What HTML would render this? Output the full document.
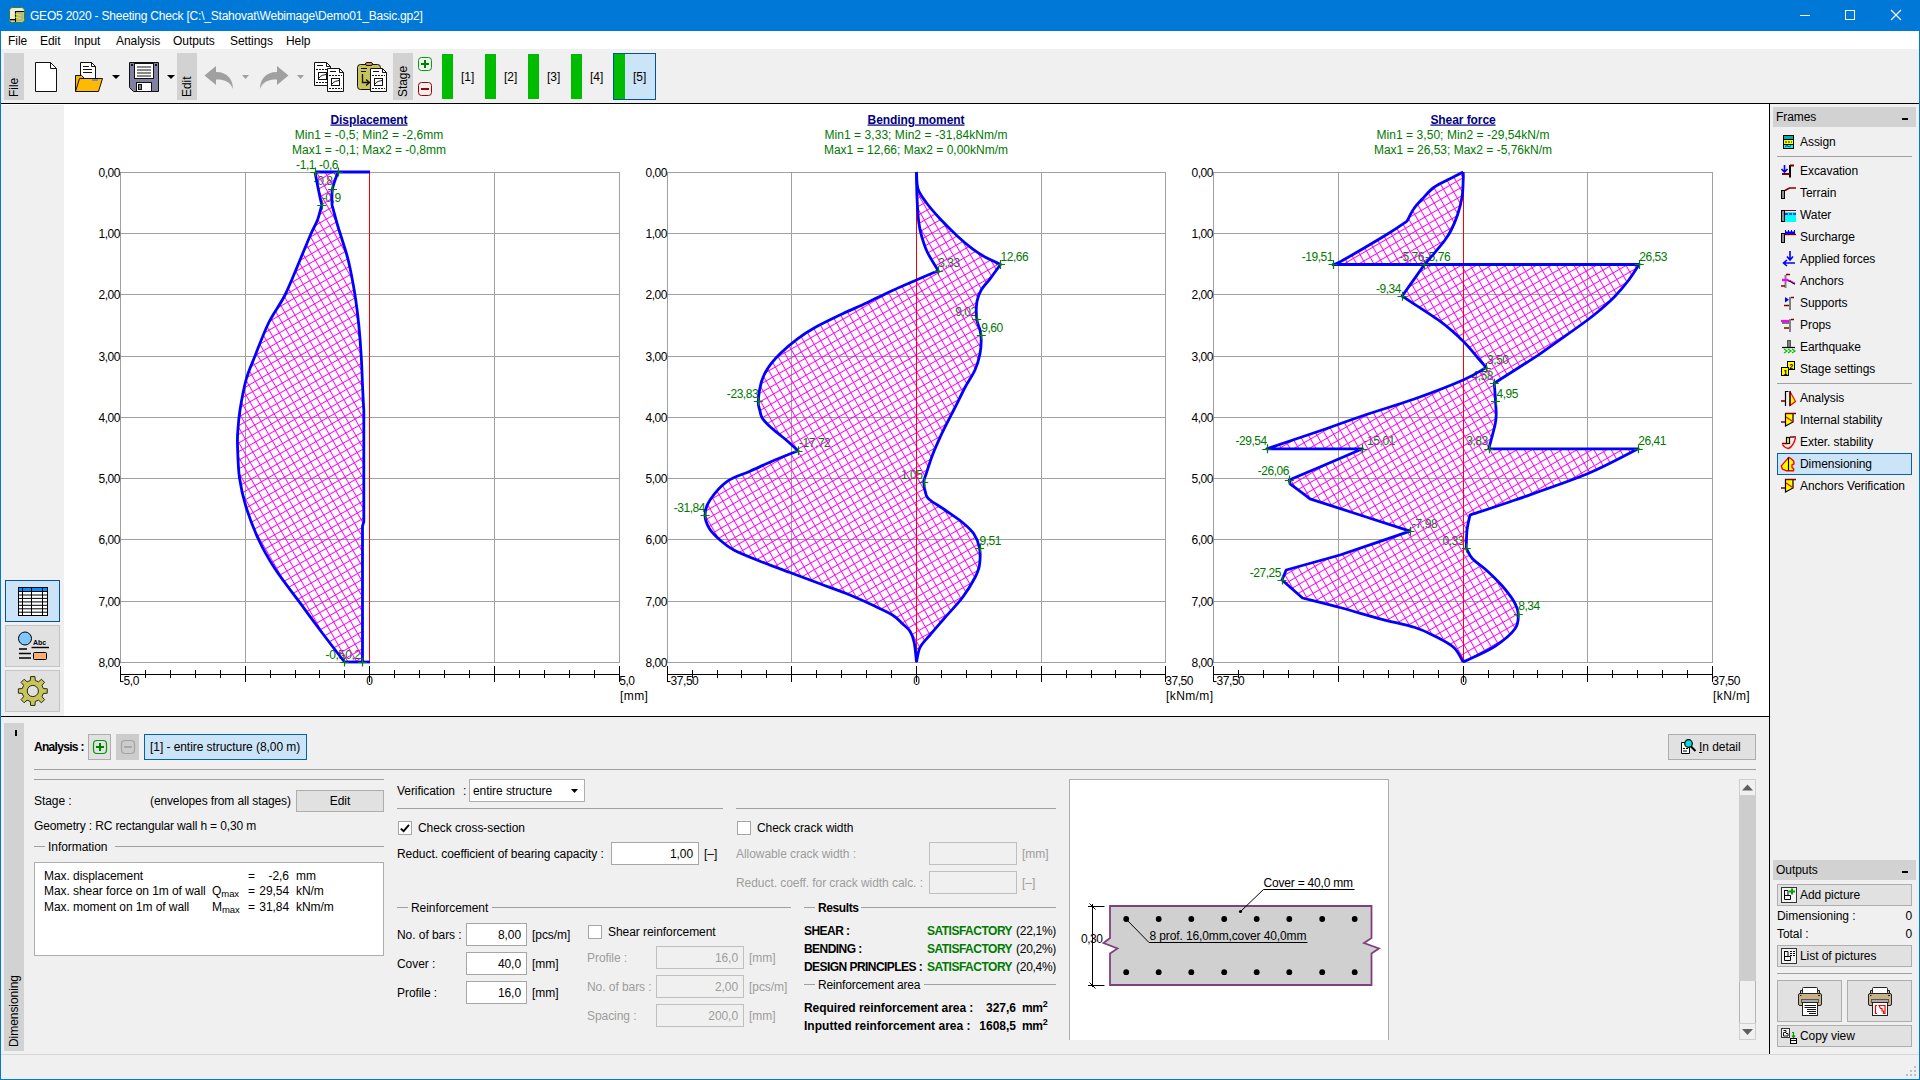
<!DOCTYPE html>
<html lang="en">
<head>
<meta charset="utf-8">
<title>GEO5 2020 - Sheeting Check</title>
<style>
*{box-sizing:border-box;margin:0;padding:0}
html,body{width:1920px;height:1080px;overflow:hidden;background:#f0f0f0}
body{font-family:"Liberation Sans",sans-serif;font-size:12px;color:#000;position:relative;line-height:14px;letter-spacing:-0.06px}
.abs{position:absolute}
.t{position:absolute;white-space:nowrap;line-height:14px;height:14px}
.btn{position:absolute;background:#e1e1e1;border:1px solid #adadad}
.inp{position:absolute;background:#fff;border:1px solid #a6a6a6;text-align:right;padding:4px 5px 0 0;line-height:14px}
.inp.dis{background:#f0f0f0;border-color:#bfbfbf;color:#9d9d9d}
.gray{color:#9d9d9d}
.hl{position:absolute;height:1px;background:#a0a0a0}
.vl{position:absolute;width:1px;background:#a0a0a0}
.chk{position:absolute;width:14px;height:14px;background:#fff;border:1px solid #a6a6a6}
.b{font-weight:bold}
.grn{color:#007a00}
svg{position:absolute;overflow:visible}
</style>
</head>
<body>
<!-- window frame -->
<div class="abs" style="left:0;top:0;width:1920px;height:1080px;background:#0078d7"></div>
<div class="abs" style="left:1px;top:31px;width:1918px;height:1048px;background:#f0f0f0"></div>
<!-- title bar -->
<svg style="left:9px;top:7px" width="16" height="16" viewBox="0 0 16 16">
<rect x="0.500" y="0.500" width="15" height="15" rx="3" fill="#ececd8" stroke="#3f7f1a"/>
<path d="M6.500 4.500H14.800V12Q14.800 14.800 12 14.800H6.500Z" fill="#b4ba78"/>
<path d="M1.200 12.600H6.500V14.800H3.500Q1.200 14.800 1.200 12.600Z" fill="#c8cc98"/>
<path d="M1 12.600H6.500M6.500 15V4.500H15" fill="none" stroke="#000" stroke-width="1.100"/>
<path d="M4.600 7.200C7 6.800 9 7.500 12 8.600M4.800 10.300C7 10 9 10.800 12 11.700" stroke="#f2f21a" stroke-width="0.900" fill="none"/>
</svg>
<div class="t" style="left:30px;top:9px;color:#fff;letter-spacing:-0.21px">GEO5 2020 - Sheeting Check [C:\_Stahovat\Webimage\Demo01_Basic.gp2]</div>
<svg style="left:1790px;top:0" width="130" height="31" viewBox="0 0 130 31">
<path d="M10 15.5H20" stroke="#fff" stroke-width="1"/>
<rect x="55.5" y="10.5" width="9" height="9" fill="none" stroke="#fff" stroke-width="1"/>
<path d="M101 10L111 20M111 10L101 20" stroke="#fff" stroke-width="1.1"/>
</svg>
<!-- menu bar -->
<div class="abs" style="left:1px;top:31px;width:1918px;height:18px;background:#fff"></div>
<div class="t" style="left:8px;top:34px">File</div>
<div class="t" style="left:40px;top:34px">Edit</div>
<div class="t" style="left:74px;top:34px">Input</div>
<div class="t" style="left:116px;top:34px">Analysis</div>
<div class="t" style="left:173px;top:34px">Outputs</div>
<div class="t" style="left:230px;top:34px">Settings</div>
<div class="t" style="left:286px;top:34px">Help</div>
<!-- toolbar -->
<div class="abs" style="left:4px;top:53px;width:20px;height:47px;background:#d2d2d2"></div>
<div class="abs" style="left:177px;top:53px;width:20px;height:47px;background:#d2d2d2"></div>
<div class="abs" style="left:393px;top:53px;width:20px;height:47px;background:#d2d2d2"></div>
<div class="t" style="left:7px;top:97px;transform-origin:0 0;transform:rotate(-90deg)">File</div>
<div class="t" style="left:180px;top:97px;transform-origin:0 0;transform:rotate(-90deg)">Edit</div>
<div class="t" style="left:396px;top:97px;transform-origin:0 0;transform:rotate(-90deg)">Stage</div>
<svg style="left:30px;top:58px" width="390" height="40" viewBox="30 58 390 40">
<!-- new -->
<path d="M35.5 62.5H50.5L56.5 68.5V91.5H35.5Z" fill="#fff" stroke="#111" stroke-width="1"/>
<path d="M50.5 62.5V68.5H56.5" fill="none" stroke="#111" stroke-width="1"/>
<!-- open -->
<path d="M80.5 62.5H91.5L95.5 66.5V80H80.5Z" fill="#fff" stroke="#111" stroke-width="1"/>
<path d="M91.5 62.5V66.5H95.5" fill="none" stroke="#111"/>
<path d="M83 66.5H89M83 69.5H92M83 72.5H92" stroke="#111" stroke-width="1"/>
<path d="M75.5 91.5V75.5H81.5L84.5 78.5H97.5V80" fill="#f7b500" stroke="#111" stroke-width="1"/>
<path d="M75.5 91.5L79.5 78.5H102.5L98.5 91.5Z" fill="#ffb900" stroke="#111" stroke-width="1"/>
<rect x="92" y="79" width="6" height="2" fill="#8a8a9a"/>
<path d="M112 75H120L116 79Z" fill="#000"/>
<!-- save -->
<path d="M129.500 62.500H158.500V91.500H133.500L129.500 87.500Z" fill="#8080a0" stroke="#111" stroke-width="1"/>
<rect x="134.500" y="63.500" width="19" height="15" fill="#fff" stroke="#111"/>
<path d="M137 67H151M137 70H151M137 73H151M137 76H151" stroke="#111" stroke-width="1"/>
<rect x="136.500" y="82.500" width="15" height="9" fill="#fff" stroke="#111"/>
<rect x="138.500" y="84.500" width="3" height="5" fill="#8080a0" stroke="#111"/>
<rect x="131" y="64" width="2" height="2" fill="#111"/><rect x="155" y="64" width="2" height="2" fill="#111"/>
<path d="M167 75H175L171 79Z" fill="#000"/>
<!-- undo -->
<path d="M204.500 75.500L216 66V72C228 72 233 80 233 89C230 82 226 79.500 216 79.500V85Z" fill="#a0a0a0"/>
<path d="M242 75H249L245.500 79Z" fill="#a0a0a0"/>
<!-- redo -->
<path d="M288.500 75.500L277 66V72C265 72 260 80 260 89C263 82 267 79.500 277 79.500V85Z" fill="#a0a0a0"/>
<path d="M297 75H304L300.500 79Z" fill="#a0a0a0"/>
<!-- copy -->
<g id="docA"><path d="M314.500 62.500H326.500L330.500 66.500V85.500H314.500Z" fill="#fff" stroke="#111"/>
<path d="M326.500 62.500V66.500H330.500" fill="none" stroke="#111"/>
<path d="M317 65.500H323" stroke="#111"/><path d="M316 69.500H329M316 82.500H329" stroke="#111" stroke-dasharray="2 1"/>
<rect x="318.500" y="72.500" width="8" height="7" fill="#fff" stroke="#111"/><path d="M319 78C321 75 324 75 326 74.500" fill="none" stroke="#111"/></g>
<use href="#docA" x="13" y="6"/>
<!-- paste -->
<rect x="357.500" y="64.500" width="23" height="25" rx="3" fill="#c8c45c" stroke="#111"/>
<rect x="365.500" y="62.500" width="7" height="3" rx="1.500" fill="#e09030" stroke="#111"/>
<path d="M361 68.500H367M361 71.500H366" stroke="#111"/>
<path d="M362.500 74V82.500H369M366 79.500L369.500 82.500L366 85.500" fill="none" stroke="#111" stroke-width="1.300"/>
<use href="#docA" x="56" y="6"/>
</svg>
<!-- stage +/- -->
<svg style="left:417px;top:56px" width="16" height="42" viewBox="417 56 16 42">
<rect x="418.500" y="57.500" width="13" height="13" rx="3" fill="#f0f0f0" stroke="#00a000"/>
<path d="M421 64H429M425 60V68" stroke="#008000" stroke-width="2"/>
<rect x="418.500" y="82.500" width="13" height="13" rx="3" fill="#f0f0f0" stroke="#a00000"/>
<path d="M421 89H429" stroke="#a00000" stroke-width="2"/>
</svg>
<div class="abs" style="left:613px;top:53px;width:43px;height:47px;background:#cce4f7;border:1px solid #00549e"></div>
<div class="abs" style="left:442px;top:54px;width:11px;height:45px;background:#00bc00"></div>
<div class="abs" style="left:485px;top:54px;width:11px;height:45px;background:#00bc00"></div>
<div class="abs" style="left:528px;top:54px;width:11px;height:45px;background:#00bc00"></div>
<div class="abs" style="left:571px;top:54px;width:11px;height:45px;background:#00bc00"></div>
<div class="abs" style="left:614px;top:54px;width:11px;height:45px;background:#00bc00"></div>
<div class="t" style="left:461px;top:70px">[1]</div>
<div class="t" style="left:504px;top:70px">[2]</div>
<div class="t" style="left:547px;top:70px">[3]</div>
<div class="t" style="left:590px;top:70px">[4]</div>
<div class="t" style="left:633px;top:70px">[5]</div>
<!-- separators -->
<div class="abs" style="left:1px;top:103px;width:1918px;height:1px;background:#000"></div>
<div class="abs" style="left:1px;top:104px;width:1768px;height:612px;background:#fff"></div>
<div class="abs" style="left:1px;top:105px;width:63px;height:611px;background:#f0f0f0"></div>
<div class="abs" style="left:1769px;top:104px;width:1px;height:950px;background:#000"></div>
<div class="abs" style="left:1px;top:716px;width:1768px;height:1px;background:#000"></div>
<svg style="left:64px;top:104px" width="1705" height="612" viewBox="64 104 1705 612" font-family="Liberation Sans, sans-serif" font-size="12">
<defs><pattern id="hx" patternUnits="userSpaceOnUse" width="7.5" height="7.5" patternTransform="rotate(-30)"><path d="M0 0.5H7.5M0.5 0V7.5" stroke="#ff00ff" stroke-width="1" shape-rendering="crispEdges"/></pattern></defs>
<path d="M120.5 172V663M245.5 172V663M369.5 172V663M494.5 172V663M619.5 172V663M120.0 172.5H620.0M120.0 233.5H620.0M120.0 294.5H620.0M120.0 356.5H620.0M120.0 417.5H620.0M120.0 478.5H620.0M120.0 539.5H620.0M120.0 601.5H620.0M120.0 662.5H620.0" stroke="#a0a0a0" stroke-width="1" fill="none" shape-rendering="crispEdges"/>
<text x="120.0" y="176.80" text-anchor="end" letter-spacing="-0.45">0,00</text>
<text x="120.0" y="238.05" text-anchor="end" letter-spacing="-0.45">1,00</text>
<text x="120.0" y="299.30" text-anchor="end" letter-spacing="-0.45">2,00</text>
<text x="120.0" y="360.55" text-anchor="end" letter-spacing="-0.45">3,00</text>
<text x="120.0" y="421.80" text-anchor="end" letter-spacing="-0.45">4,00</text>
<text x="120.0" y="483.05" text-anchor="end" letter-spacing="-0.45">5,00</text>
<text x="120.0" y="544.30" text-anchor="end" letter-spacing="-0.45">6,00</text>
<text x="120.0" y="605.55" text-anchor="end" letter-spacing="-0.45">7,00</text>
<text x="120.0" y="666.80" text-anchor="end" letter-spacing="-0.45">8,00</text>
<text x="369.0" y="123.5" text-anchor="middle" font-weight="bold" fill="#000080" text-decoration="underline" letter-spacing="-0.08">Displacement</text>
<text x="369.0" y="138.5" text-anchor="middle" fill="#007800" letter-spacing="0.05">Min1 = -0,5; Min2 = -2,6mm</text>
<text x="369.0" y="153.5" text-anchor="middle" fill="#007800" letter-spacing="0">Max1 = -0,1; Max2 = -0,8mm</text>
<text x="315.0" y="168.5" text-anchor="end" fill="#007800" letter-spacing="-0.45">-1,1</text>
<text x="338.0" y="168.5" text-anchor="end" fill="#007800" letter-spacing="-0.45">-0,6</text>
<text x="332.5" y="185.2" text-anchor="end" fill="#007800" letter-spacing="-0.45">-0,8</text>
<text x="321.8" y="201.5" text-anchor="start" fill="#007800" letter-spacing="-0.45">-0,9</text>
<text x="344.5" y="658.5" text-anchor="end" fill="#007800" letter-spacing="-0.45">-0,5</text>
<text x="360.5" y="658.5" text-anchor="end" fill="#007800" letter-spacing="-0.45">-0,2</text>
<path d="M315.0 172.0C315.4 174.2 316.4 179.5 317.5 185.0C318.6 190.5 321.0 201.7 321.8 205.0C321.0 207.5 319.3 215.2 317.5 220.0C315.7 224.8 313.9 227.1 311.0 233.8C308.1 240.4 304.3 249.8 300.0 260.0C295.7 270.2 290.2 284.6 285.0 295.0C279.8 305.4 273.8 312.3 268.8 322.5C263.8 332.7 258.8 346.4 255.0 356.0C251.2 365.6 248.5 371.0 246.0 380.0C243.5 389.0 241.3 401.9 240.0 410.0C238.7 418.1 238.4 422.9 238.0 428.8C237.6 434.6 237.2 436.8 237.5 445.0C237.8 453.2 238.0 467.6 239.5 478.0C241.0 488.4 243.0 497.2 246.2 507.5C249.5 517.8 254.0 529.8 258.8 540.0C263.5 550.2 268.3 558.5 275.0 568.8C281.7 579.0 291.2 591.0 298.8 601.2C306.2 611.5 312.4 619.9 320.0 630.0C327.6 640.1 340.4 656.7 344.5 662.0L362.5 662.0C362.5 639.3 362.5 548.7 362.5 526.0C362.7 525.3 363.5 522.7 363.8 522.0C363.8 503.3 363.8 428.7 363.8 410.0C363.5 405.8 362.9 394.0 362.5 385.0C362.1 376.0 361.9 366.0 361.2 356.0C360.6 346.0 359.8 335.2 358.8 325.0C357.7 314.8 356.7 305.4 355.0 295.0C353.3 284.6 350.8 271.2 348.8 262.5C346.8 253.8 344.9 248.8 343.0 242.5C341.1 236.2 339.3 231.2 337.5 225.0C335.7 218.8 332.9 208.3 332.0 205.0C332.1 202.3 331.5 194.2 332.5 188.8C333.5 183.2 337.1 174.8 338.0 172.0Z" fill="url(#hx)" fill-rule="evenodd" stroke="none"/>
<path d="M369.5 172V663" stroke="#ff0000" stroke-width="1" shape-rendering="crispEdges"/>
<path d="M315.0 172.0C315.4 174.2 316.4 179.5 317.5 185.0C318.6 190.5 321.0 201.7 321.8 205.0C321.0 207.5 319.3 215.2 317.5 220.0C315.7 224.8 313.9 227.1 311.0 233.8C308.1 240.4 304.3 249.8 300.0 260.0C295.7 270.2 290.2 284.6 285.0 295.0C279.8 305.4 273.8 312.3 268.8 322.5C263.8 332.7 258.8 346.4 255.0 356.0C251.2 365.6 248.5 371.0 246.0 380.0C243.5 389.0 241.3 401.9 240.0 410.0C238.7 418.1 238.4 422.9 238.0 428.8C237.6 434.6 237.2 436.8 237.5 445.0C237.8 453.2 238.0 467.6 239.5 478.0C241.0 488.4 243.0 497.2 246.2 507.5C249.5 517.8 254.0 529.8 258.8 540.0C263.5 550.2 268.3 558.5 275.0 568.8C281.7 579.0 291.2 591.0 298.8 601.2C306.2 611.5 312.4 619.9 320.0 630.0C327.6 640.1 340.4 656.7 344.5 662.0" fill="none" stroke="#0000ff" stroke-width="2.8" stroke-linejoin="round"/>
<path d="M338.0 172.0C337.1 174.8 333.5 183.2 332.5 188.8C331.5 194.2 332.1 202.3 332.0 205.0C332.9 208.3 335.7 218.8 337.5 225.0C339.3 231.2 341.1 236.2 343.0 242.5C344.9 248.8 346.8 253.8 348.8 262.5C350.8 271.2 353.3 284.6 355.0 295.0C356.7 305.4 357.7 314.8 358.8 325.0C359.8 335.2 360.6 346.0 361.2 356.0C361.9 366.0 362.1 376.0 362.5 385.0C362.9 394.0 363.5 405.8 363.8 410.0C363.8 428.7 363.8 503.3 363.8 522.0C363.5 522.7 362.7 525.3 362.5 526.0C362.5 548.7 362.5 639.3 362.5 662.0" fill="none" stroke="#0000ff" stroke-width="2.8" stroke-linejoin="round"/>
<path d="M315.0 172.0L370.0 172.0" stroke="#0000ff" stroke-width="2.8"/>
<path d="M344.5 662.0L370.0 662.0" stroke="#0000ff" stroke-width="2.8"/>
<path d="M310.5 172.5h9M315.5 167.5v9M333.5 172.5h9M338.5 167.5v9M328.0 189.5h9M332.5 184.2v9M317.2 205.5h9M322.5 200.5v9M340.0 662.5h9M344.5 657.5v9M358.0 662.5h9M362.5 657.5v9" stroke="#008000" stroke-width="1.2" fill="none"/>
<path d="M120.0 674H620.0M120.5 666V682M145.5 670V678M170.5 670V678M195.5 670V678M220.5 670V678M245.5 666V682M270.5 670V678M295.5 670V678M319.5 670V678M344.5 670V678M369.5 666V682M394.5 670V678M419.5 670V678M444.5 670V678M469.5 670V678M494.5 666V682M519.5 670V678M544.5 670V678M569.5 670V678M594.5 670V678M619.5 666V682" stroke="#000" stroke-width="1" fill="none" shape-rendering="crispEdges"/>
<text x="120.0" y="685" letter-spacing="-0.45">-5,0</text>
<text x="619.2" y="685" letter-spacing="-0.45">5,0</text>
<text x="620.0" y="700" letter-spacing="0.4">[mm]</text>
<text x="369.5" y="685" text-anchor="middle">0</text>
<path d="M667.5 172V663M791.5 172V663M916.5 172V663M1041.5 172V663M1165.5 172V663M667.0 172.5H1166.0M667.0 233.5H1166.0M667.0 294.5H1166.0M667.0 356.5H1166.0M667.0 417.5H1166.0M667.0 478.5H1166.0M667.0 539.5H1166.0M667.0 601.5H1166.0M667.0 662.5H1166.0" stroke="#a0a0a0" stroke-width="1" fill="none" shape-rendering="crispEdges"/>
<text x="667.0" y="176.80" text-anchor="end" letter-spacing="-0.45">0,00</text>
<text x="667.0" y="238.05" text-anchor="end" letter-spacing="-0.45">1,00</text>
<text x="667.0" y="299.30" text-anchor="end" letter-spacing="-0.45">2,00</text>
<text x="667.0" y="360.55" text-anchor="end" letter-spacing="-0.45">3,00</text>
<text x="667.0" y="421.80" text-anchor="end" letter-spacing="-0.45">4,00</text>
<text x="667.0" y="483.05" text-anchor="end" letter-spacing="-0.45">5,00</text>
<text x="667.0" y="544.30" text-anchor="end" letter-spacing="-0.45">6,00</text>
<text x="667.0" y="605.55" text-anchor="end" letter-spacing="-0.45">7,00</text>
<text x="667.0" y="666.80" text-anchor="end" letter-spacing="-0.45">8,00</text>
<text x="916.0" y="123.5" text-anchor="middle" font-weight="bold" fill="#000080" text-decoration="underline" letter-spacing="-0.08">Bending moment</text>
<text x="916.0" y="138.5" text-anchor="middle" fill="#007800" letter-spacing="0.05">Min1 = 3,33; Min2 = -31,84kNm/m</text>
<text x="916.0" y="153.5" text-anchor="middle" fill="#007800" letter-spacing="0">Max1 = 12,66; Max2 = 0,00kNm/m</text>
<text x="1000.5" y="261.0" text-anchor="start" fill="#007800" letter-spacing="-0.45">12,66</text>
<text x="938.2" y="267.2" text-anchor="start" fill="#007800" letter-spacing="-0.45">3,33</text>
<text x="976.8" y="315.8" text-anchor="end" fill="#007800" letter-spacing="-0.45">9,02</text>
<text x="981.2" y="331.5" text-anchor="start" fill="#007800" letter-spacing="-0.45">9,60</text>
<text x="758.2" y="397.8" text-anchor="end" fill="#007800" letter-spacing="-0.45">-23,83</text>
<text x="799.0" y="447.2" text-anchor="start" fill="#007800" letter-spacing="-0.45">-17,72</text>
<text x="922.5" y="479.0" text-anchor="end" fill="#007800" letter-spacing="-0.45">1,05</text>
<text x="705.0" y="511.5" text-anchor="end" fill="#007800" letter-spacing="-0.45">-31,84</text>
<text x="979.5" y="544.5" text-anchor="start" fill="#007800" letter-spacing="-0.45">9,51</text>
<path d="M916.5 172.0C916.6 176.2 916.6 189.1 917.0 197.5C917.4 205.9 917.9 215.8 918.8 222.5C919.6 229.2 920.5 232.5 922.0 237.5C923.5 242.5 924.8 247.0 927.5 252.5C930.2 258.0 936.5 267.7 938.2 270.8C934.6 272.3 924.1 276.7 916.5 280.0C908.9 283.3 900.7 286.8 892.5 290.5C884.3 294.2 876.2 298.4 867.5 302.5C858.8 306.6 848.8 310.8 840.0 315.0C831.2 319.2 822.1 323.5 815.0 327.5C807.9 331.5 803.3 334.4 797.5 338.8C791.7 343.1 785.0 348.8 780.0 353.8C775.0 358.8 770.6 364.0 767.5 368.8C764.4 373.5 762.8 377.1 761.2 382.5C759.7 387.9 758.5 396.6 758.2 401.2C758.0 405.9 759.1 407.4 759.8 410.2C760.5 413.0 760.6 415.5 762.2 418.1C763.8 420.7 766.5 423.4 769.3 426.0C772.0 428.6 775.6 431.3 778.7 433.9C781.9 436.5 785.0 438.9 788.2 441.7C791.4 444.5 796.4 449.2 798.0 450.8C794.2 452.3 783.0 456.6 775.0 460.0C767.0 463.4 757.9 467.7 750.0 471.2C742.1 474.8 734.2 476.5 727.5 481.2C720.8 486.0 713.8 494.4 710.0 500.0C706.2 505.6 705.1 510.2 705.0 515.0C704.9 519.8 707.0 524.6 709.5 528.8C712.0 532.9 716.0 536.5 720.0 540.0C724.0 543.5 727.1 546.5 733.8 550.0C740.4 553.5 750.6 557.5 760.0 561.2C769.4 565.0 780.0 568.8 790.0 572.5C800.0 576.2 810.0 580.0 820.0 583.8C830.0 587.5 840.8 591.2 850.0 595.0C859.2 598.8 867.9 602.9 875.0 606.2C882.1 609.6 887.9 612.1 892.5 615.0C897.1 617.9 899.6 621.0 902.5 623.8C905.4 626.5 908.0 628.1 910.0 631.2C912.0 634.4 913.2 637.4 914.2 642.5C915.3 647.6 916.1 658.8 916.5 662.0L916.5 662.0C917.1 659.6 917.8 652.0 920.0 647.5C922.2 643.0 925.8 640.0 930.0 635.0C934.2 630.0 939.6 623.8 945.0 617.5C950.4 611.2 957.5 604.2 962.5 597.5C967.5 590.8 972.2 582.9 975.0 577.5C977.8 572.1 978.8 569.9 979.5 565.0C980.2 560.1 980.5 553.2 979.5 548.0C978.5 542.8 976.6 538.0 973.8 533.8C970.9 529.5 967.3 526.5 962.5 522.5C957.7 518.5 950.4 513.8 945.0 510.0C939.6 506.2 933.1 502.5 930.0 500.0C926.9 497.5 927.3 497.9 926.2 495.0C925.2 492.1 923.8 486.0 923.8 482.5C923.8 479.0 924.8 478.3 926.2 473.8C927.7 469.2 930.2 461.0 932.5 455.0C934.8 449.0 937.8 442.5 940.0 437.5C942.2 432.5 943.5 430.0 946.0 425.0C948.5 420.0 951.8 413.8 955.0 407.5C958.2 401.2 961.7 393.8 965.0 387.5C968.3 381.2 972.5 375.6 975.0 370.0C977.5 364.4 979.0 358.8 980.0 353.8C981.0 348.8 981.2 344.0 981.2 340.0C981.2 336.0 980.8 333.5 980.0 330.0C979.2 326.5 977.2 324.0 976.8 319.2C976.2 314.5 976.2 306.1 977.0 301.2C977.8 296.4 979.1 293.8 981.2 290.0C983.4 286.2 986.8 283.0 990.0 278.8C993.2 274.5 998.8 266.9 1000.5 264.5C997.9 263.2 989.7 259.6 985.0 257.0C980.3 254.4 977.1 252.2 972.5 248.8C967.9 245.3 962.9 241.2 957.5 236.2C952.1 231.2 945.2 224.4 940.0 218.8C934.8 213.1 929.9 207.5 926.2 202.5C922.6 197.5 919.6 193.8 918.0 188.8C916.4 183.7 916.8 174.8 916.5 172.0Z" fill="url(#hx)" fill-rule="evenodd" stroke="none"/>
<path d="M916.5 172V663" stroke="#ff0000" stroke-width="1" shape-rendering="crispEdges"/>
<path d="M916.5 172.0C916.6 176.2 916.6 189.1 917.0 197.5C917.4 205.9 917.9 215.8 918.8 222.5C919.6 229.2 920.5 232.5 922.0 237.5C923.5 242.5 924.8 247.0 927.5 252.5C930.2 258.0 936.5 267.7 938.2 270.8C934.6 272.3 924.1 276.7 916.5 280.0C908.9 283.3 900.7 286.8 892.5 290.5C884.3 294.2 876.2 298.4 867.5 302.5C858.8 306.6 848.8 310.8 840.0 315.0C831.2 319.2 822.1 323.5 815.0 327.5C807.9 331.5 803.3 334.4 797.5 338.8C791.7 343.1 785.0 348.8 780.0 353.8C775.0 358.8 770.6 364.0 767.5 368.8C764.4 373.5 762.8 377.1 761.2 382.5C759.7 387.9 758.5 396.6 758.2 401.2C758.0 405.9 759.1 407.4 759.8 410.2C760.5 413.0 760.6 415.5 762.2 418.1C763.8 420.7 766.5 423.4 769.3 426.0C772.0 428.6 775.6 431.3 778.7 433.9C781.9 436.5 785.0 438.9 788.2 441.7C791.4 444.5 796.4 449.2 798.0 450.8C794.2 452.3 783.0 456.6 775.0 460.0C767.0 463.4 757.9 467.7 750.0 471.2C742.1 474.8 734.2 476.5 727.5 481.2C720.8 486.0 713.8 494.4 710.0 500.0C706.2 505.6 705.1 510.2 705.0 515.0C704.9 519.8 707.0 524.6 709.5 528.8C712.0 532.9 716.0 536.5 720.0 540.0C724.0 543.5 727.1 546.5 733.8 550.0C740.4 553.5 750.6 557.5 760.0 561.2C769.4 565.0 780.0 568.8 790.0 572.5C800.0 576.2 810.0 580.0 820.0 583.8C830.0 587.5 840.8 591.2 850.0 595.0C859.2 598.8 867.9 602.9 875.0 606.2C882.1 609.6 887.9 612.1 892.5 615.0C897.1 617.9 899.6 621.0 902.5 623.8C905.4 626.5 908.0 628.1 910.0 631.2C912.0 634.4 913.2 637.4 914.2 642.5C915.3 647.6 916.1 658.8 916.5 662.0" fill="none" stroke="#0000ff" stroke-width="2.8" stroke-linejoin="round"/>
<path d="M916.5 172.0C916.8 174.8 916.4 183.7 918.0 188.8C919.6 193.8 922.6 197.5 926.2 202.5C929.9 207.5 934.8 213.1 940.0 218.8C945.2 224.4 952.1 231.2 957.5 236.2C962.9 241.2 967.9 245.3 972.5 248.8C977.1 252.2 980.3 254.4 985.0 257.0C989.7 259.6 997.9 263.2 1000.5 264.5C998.8 266.9 993.2 274.5 990.0 278.8C986.8 283.0 983.4 286.2 981.2 290.0C979.1 293.8 977.8 296.4 977.0 301.2C976.2 306.1 976.2 314.5 976.8 319.2C977.2 324.0 979.2 326.5 980.0 330.0C980.8 333.5 981.2 336.0 981.2 340.0C981.2 344.0 981.0 348.8 980.0 353.8C979.0 358.8 977.5 364.4 975.0 370.0C972.5 375.6 968.3 381.2 965.0 387.5C961.7 393.8 958.2 401.2 955.0 407.5C951.8 413.8 948.5 420.0 946.0 425.0C943.5 430.0 942.2 432.5 940.0 437.5C937.8 442.5 934.8 449.0 932.5 455.0C930.2 461.0 927.7 469.2 926.2 473.8C924.8 478.3 923.8 479.0 923.8 482.5C923.8 486.0 925.2 492.1 926.2 495.0C927.3 497.9 926.9 497.5 930.0 500.0C933.1 502.5 939.6 506.2 945.0 510.0C950.4 513.8 957.7 518.5 962.5 522.5C967.3 526.5 970.9 529.5 973.8 533.8C976.6 538.0 978.5 542.8 979.5 548.0C980.5 553.2 980.2 560.1 979.5 565.0C978.8 569.9 977.8 572.1 975.0 577.5C972.2 582.9 967.5 590.8 962.5 597.5C957.5 604.2 950.4 611.2 945.0 617.5C939.6 623.8 934.2 630.0 930.0 635.0C925.8 640.0 922.2 643.0 920.0 647.5C917.8 652.0 917.1 659.6 916.5 662.0" fill="none" stroke="#0000ff" stroke-width="2.8" stroke-linejoin="round"/>
<path d="M996.0 264.5h9M1000.5 260.0v9M933.8 271.5h9M938.5 266.2v9M972.2 319.5h9M977.5 314.8v9M976.8 335.5h9M981.5 330.5v9M753.8 401.5h9M758.5 396.8v9M793.5 451.5h9M798.5 446.2v9M919.2 482.5h9M924.5 478.0v9M700.5 515.5h9M705.5 510.5v9M975.0 548.5h9M980.5 543.5v9" stroke="#008000" stroke-width="1.2" fill="none"/>
<path d="M667.0 674H1166.0M667.5 666V682M692.5 670V678M717.5 670V678M741.5 670V678M766.5 670V678M791.5 666V682M816.5 670V678M841.5 670V678M866.5 670V678M891.5 670V678M916.5 666V682M941.5 670V678M966.5 670V678M991.5 670V678M1016.5 670V678M1041.5 666V682M1066.5 670V678M1091.5 670V678M1115.5 670V678M1140.5 670V678M1165.5 666V682" stroke="#000" stroke-width="1" fill="none" shape-rendering="crispEdges"/>
<text x="667.0" y="685" letter-spacing="-0.45">-37,50</text>
<text x="1165.2" y="685" letter-spacing="-0.45">37,50</text>
<text x="1166.0" y="700" letter-spacing="0.4">[kNm/m]</text>
<text x="916.5" y="685" text-anchor="middle">0</text>
<path d="M1213.5 172V663M1338.5 172V663M1463.5 172V663M1587.5 172V663M1712.5 172V663M1213.0 172.5H1713.0M1213.0 233.5H1713.0M1213.0 294.5H1713.0M1213.0 356.5H1713.0M1213.0 417.5H1713.0M1213.0 478.5H1713.0M1213.0 539.5H1713.0M1213.0 601.5H1713.0M1213.0 662.5H1713.0" stroke="#a0a0a0" stroke-width="1" fill="none" shape-rendering="crispEdges"/>
<text x="1213.0" y="176.80" text-anchor="end" letter-spacing="-0.45">0,00</text>
<text x="1213.0" y="238.05" text-anchor="end" letter-spacing="-0.45">1,00</text>
<text x="1213.0" y="299.30" text-anchor="end" letter-spacing="-0.45">2,00</text>
<text x="1213.0" y="360.55" text-anchor="end" letter-spacing="-0.45">3,00</text>
<text x="1213.0" y="421.80" text-anchor="end" letter-spacing="-0.45">4,00</text>
<text x="1213.0" y="483.05" text-anchor="end" letter-spacing="-0.45">5,00</text>
<text x="1213.0" y="544.30" text-anchor="end" letter-spacing="-0.45">6,00</text>
<text x="1213.0" y="605.55" text-anchor="end" letter-spacing="-0.45">7,00</text>
<text x="1213.0" y="666.80" text-anchor="end" letter-spacing="-0.45">8,00</text>
<text x="1463.0" y="123.5" text-anchor="middle" font-weight="bold" fill="#000080" text-decoration="underline" letter-spacing="-0.08">Shear force</text>
<text x="1463.0" y="138.5" text-anchor="middle" fill="#007800" letter-spacing="0.05">Min1 = 3,50; Min2 = -29,54kN/m</text>
<text x="1463.0" y="153.5" text-anchor="middle" fill="#007800" letter-spacing="0">Max1 = 26,53; Max2 = -5,76kN/m</text>
<text x="1333.0" y="261.0" text-anchor="end" fill="#007800" letter-spacing="-0.45">-19,51</text>
<text x="1424.0" y="261.0" text-anchor="end" fill="#007800" letter-spacing="-0.45">-5,76</text>
<text x="1425.0" y="261.0" text-anchor="start" fill="#007800" letter-spacing="-0.45">-5,76</text>
<text x="1639.2" y="261.0" text-anchor="start" fill="#007800" letter-spacing="-0.45">26,53</text>
<text x="1401.0" y="292.8" text-anchor="end" fill="#007800" letter-spacing="-0.45">-9,34</text>
<text x="1487.0" y="364.0" text-anchor="start" fill="#007800" letter-spacing="-0.45">3,50</text>
<text x="1493.0" y="379.8" text-anchor="end" fill="#007800" letter-spacing="-0.45">4,58</text>
<text x="1496.5" y="397.8" text-anchor="start" fill="#007800" letter-spacing="-0.45">4,95</text>
<text x="1266.8" y="445.2" text-anchor="end" fill="#007800" letter-spacing="-0.45">-29,54</text>
<text x="1363.5" y="445.2" text-anchor="start" fill="#007800" letter-spacing="-0.45">-15,01</text>
<text x="1487.8" y="445.2" text-anchor="end" fill="#007800" letter-spacing="-0.45">3,83</text>
<text x="1638.2" y="445.2" text-anchor="start" fill="#007800" letter-spacing="-0.45">26,41</text>
<text x="1289.0" y="475.0" text-anchor="end" fill="#007800" letter-spacing="-0.45">-26,06</text>
<text x="1412.0" y="527.8" text-anchor="start" fill="#007800" letter-spacing="-0.45">-7,98</text>
<text x="1464.0" y="544.5" text-anchor="end" fill="#007800" letter-spacing="-0.45">0,33</text>
<text x="1281.0" y="576.5" text-anchor="end" fill="#007800" letter-spacing="-0.45">-27,25</text>
<text x="1518.2" y="610.2" text-anchor="start" fill="#007800" letter-spacing="-0.45">8,34</text>
<path d="M1463.2 172.0C1461.0 173.1 1454.9 176.2 1450.0 178.8C1445.1 181.3 1438.3 184.2 1433.8 187.5C1429.2 190.8 1425.8 195.2 1422.5 198.8C1419.2 202.3 1416.3 205.0 1413.8 208.8C1411.2 212.5 1408.1 219.2 1407.0 221.2C1404.2 223.1 1397.0 228.1 1390.0 232.5C1383.0 236.9 1373.5 242.5 1365.0 247.5C1356.5 252.5 1344.1 259.7 1338.8 262.5C1333.4 265.3 1334.0 264.2 1333.0 264.5C1348.2 264.5 1409.2 264.5 1424.5 264.5C1420.8 269.8 1405.8 291.0 1402.0 296.2C1408.3 300.4 1429.8 313.8 1440.0 321.2C1450.2 328.8 1457.0 335.2 1463.2 341.2C1469.5 347.3 1473.7 353.1 1477.5 357.5C1481.3 361.9 1484.8 365.8 1486.2 367.5C1482.4 369.6 1475.1 374.8 1463.2 380.0C1451.4 385.2 1431.4 392.9 1415.0 398.8C1398.6 404.6 1380.4 409.8 1365.0 415.0C1349.6 420.2 1338.9 424.4 1322.5 430.0C1306.1 435.6 1276.0 445.6 1266.8 448.8C1282.7 448.8 1346.5 448.8 1362.5 448.8C1350.3 454.0 1301.5 474.8 1289.2 480.0C1289.4 480.6 1289.9 483.1 1290.0 483.8C1293.3 486.2 1306.7 496.2 1310.0 498.8C1326.7 504.2 1393.3 525.8 1410.0 531.2C1398.3 535.2 1351.7 551.0 1340.0 555.0C1331.0 557.5 1295.2 567.5 1286.2 570.0C1285.5 571.7 1282.7 578.3 1282.0 580.0C1285.4 583.0 1299.1 595.0 1302.5 598.0C1308.8 599.6 1327.1 604.0 1340.0 607.5C1352.9 611.0 1367.5 615.4 1380.0 618.8C1392.5 622.1 1405.8 624.6 1415.0 627.5C1424.2 630.4 1428.5 632.9 1435.0 636.2C1441.5 639.6 1449.0 643.2 1453.8 647.5C1458.5 651.8 1461.7 659.6 1463.2 662.0L1463.2 662.0C1468.5 659.4 1486.4 651.8 1495.0 646.2C1503.6 640.7 1511.1 634.2 1515.0 628.8C1518.9 623.3 1518.5 618.3 1518.2 613.8C1518.0 609.2 1516.4 605.8 1513.8 601.2C1511.1 596.7 1507.1 591.5 1502.5 586.2C1497.9 581.0 1491.2 574.6 1486.2 570.0C1481.2 565.4 1475.8 562.4 1472.5 558.8C1469.2 555.1 1467.3 549.8 1466.2 548.0C1466.4 545.0 1466.4 535.5 1467.0 530.0C1467.6 524.5 1469.5 517.5 1470.0 515.0C1477.5 512.5 1495.4 506.9 1515.0 500.0C1534.6 493.1 1567.0 482.3 1587.5 473.8C1608.0 465.2 1629.8 452.9 1638.2 448.8C1613.3 448.8 1513.7 448.8 1488.8 448.8C1489.8 444.8 1493.8 430.6 1495.0 425.0C1496.2 419.4 1496.2 419.0 1496.2 415.0C1496.3 411.0 1495.8 406.5 1495.5 401.2C1495.2 396.0 1494.5 386.2 1494.2 383.2C1497.7 381.0 1507.4 374.9 1515.0 370.0C1522.6 365.1 1531.7 359.4 1540.0 353.8C1548.3 348.1 1557.1 341.9 1565.0 336.2C1572.9 330.6 1581.7 324.4 1587.5 320.0C1593.3 315.6 1595.4 314.0 1600.0 310.0C1604.6 306.0 1610.2 301.2 1615.0 296.2C1619.8 291.2 1624.7 285.3 1628.8 280.0C1632.8 274.7 1637.5 267.1 1639.2 264.5C1603.5 264.5 1460.3 264.5 1424.5 264.5C1426.0 262.7 1430.3 257.8 1433.8 253.8C1437.2 249.7 1442.1 244.0 1445.0 240.0C1447.9 236.0 1449.2 234.2 1451.2 230.0C1453.3 225.8 1455.7 220.4 1457.5 215.0C1459.3 209.6 1461.0 203.3 1462.0 197.5C1463.0 191.7 1463.0 184.2 1463.2 180.0C1463.5 175.8 1463.2 173.3 1463.2 172.0Z" fill="url(#hx)" fill-rule="evenodd" stroke="none"/>
<path d="M1463.5 172V663" stroke="#ff0000" stroke-width="1" shape-rendering="crispEdges"/>
<path d="M1463.2 172.0C1461.0 173.1 1454.9 176.2 1450.0 178.8C1445.1 181.3 1438.3 184.2 1433.8 187.5C1429.2 190.8 1425.8 195.2 1422.5 198.8C1419.2 202.3 1416.3 205.0 1413.8 208.8C1411.2 212.5 1408.1 219.2 1407.0 221.2C1404.2 223.1 1397.0 228.1 1390.0 232.5C1383.0 236.9 1373.5 242.5 1365.0 247.5C1356.5 252.5 1344.1 259.7 1338.8 262.5C1333.4 265.3 1334.0 264.2 1333.0 264.5C1348.2 264.5 1409.2 264.5 1424.5 264.5C1420.8 269.8 1405.8 291.0 1402.0 296.2C1408.3 300.4 1429.8 313.8 1440.0 321.2C1450.2 328.8 1457.0 335.2 1463.2 341.2C1469.5 347.3 1473.7 353.1 1477.5 357.5C1481.3 361.9 1484.8 365.8 1486.2 367.5C1482.4 369.6 1475.1 374.8 1463.2 380.0C1451.4 385.2 1431.4 392.9 1415.0 398.8C1398.6 404.6 1380.4 409.8 1365.0 415.0C1349.6 420.2 1338.9 424.4 1322.5 430.0C1306.1 435.6 1276.0 445.6 1266.8 448.8C1282.7 448.8 1346.5 448.8 1362.5 448.8C1350.3 454.0 1301.5 474.8 1289.2 480.0C1289.4 480.6 1289.9 483.1 1290.0 483.8C1293.3 486.2 1306.7 496.2 1310.0 498.8C1326.7 504.2 1393.3 525.8 1410.0 531.2C1398.3 535.2 1351.7 551.0 1340.0 555.0C1331.0 557.5 1295.2 567.5 1286.2 570.0C1285.5 571.7 1282.7 578.3 1282.0 580.0C1285.4 583.0 1299.1 595.0 1302.5 598.0C1308.8 599.6 1327.1 604.0 1340.0 607.5C1352.9 611.0 1367.5 615.4 1380.0 618.8C1392.5 622.1 1405.8 624.6 1415.0 627.5C1424.2 630.4 1428.5 632.9 1435.0 636.2C1441.5 639.6 1449.0 643.2 1453.8 647.5C1458.5 651.8 1461.7 659.6 1463.2 662.0" fill="none" stroke="#0000ff" stroke-width="2.8" stroke-linejoin="round"/>
<path d="M1463.2 172.0C1463.2 173.3 1463.5 175.8 1463.2 180.0C1463.0 184.2 1463.0 191.7 1462.0 197.5C1461.0 203.3 1459.3 209.6 1457.5 215.0C1455.7 220.4 1453.3 225.8 1451.2 230.0C1449.2 234.2 1447.9 236.0 1445.0 240.0C1442.1 244.0 1437.2 249.7 1433.8 253.8C1430.3 257.8 1426.0 262.7 1424.5 264.5C1460.3 264.5 1603.5 264.5 1639.2 264.5C1637.5 267.1 1632.8 274.7 1628.8 280.0C1624.7 285.3 1619.8 291.2 1615.0 296.2C1610.2 301.2 1604.6 306.0 1600.0 310.0C1595.4 314.0 1593.3 315.6 1587.5 320.0C1581.7 324.4 1572.9 330.6 1565.0 336.2C1557.1 341.9 1548.3 348.1 1540.0 353.8C1531.7 359.4 1522.6 365.1 1515.0 370.0C1507.4 374.9 1497.7 381.0 1494.2 383.2C1494.5 386.2 1495.2 396.0 1495.5 401.2C1495.8 406.5 1496.3 411.0 1496.2 415.0C1496.2 419.0 1496.2 419.4 1495.0 425.0C1493.8 430.6 1489.8 444.8 1488.8 448.8C1513.7 448.8 1613.3 448.8 1638.2 448.8C1629.8 452.9 1608.0 465.2 1587.5 473.8C1567.0 482.3 1534.6 493.1 1515.0 500.0C1495.4 506.9 1477.5 512.5 1470.0 515.0C1469.5 517.5 1467.6 524.5 1467.0 530.0C1466.4 535.5 1466.4 545.0 1466.2 548.0C1467.3 549.8 1469.2 555.1 1472.5 558.8C1475.8 562.4 1481.2 565.4 1486.2 570.0C1491.2 574.6 1497.9 581.0 1502.5 586.2C1507.1 591.5 1511.1 596.7 1513.8 601.2C1516.4 605.8 1518.0 609.2 1518.2 613.8C1518.5 618.3 1518.9 623.3 1515.0 628.8C1511.1 634.2 1503.6 640.7 1495.0 646.2C1486.4 651.8 1468.5 659.4 1463.2 662.0" fill="none" stroke="#0000ff" stroke-width="2.8" stroke-linejoin="round"/>
<path d="M1328.5 264.5h9M1333.5 260.0v9M1420.0 264.5h9M1424.5 260.0v9M1634.8 264.5h9M1639.5 260.0v9M1397.5 296.5h9M1402.5 291.8v9M1481.8 368.5h9M1486.5 363.0v9M1489.8 383.5h9M1494.5 378.8v9M1491.0 401.5h9M1496.5 396.8v9M1262.2 449.5h9M1267.5 444.2v9M1358.0 449.5h9M1362.5 444.2v9M1484.2 449.5h9M1489.5 444.2v9M1633.8 449.5h9M1638.5 444.2v9M1284.8 480.5h9M1289.5 475.5v9M1405.5 531.5h9M1410.5 526.8v9M1461.8 548.5h9M1466.5 543.5v9M1277.5 580.5h9M1282.5 575.5v9M1513.8 614.5h9M1518.5 609.2v9" stroke="#008000" stroke-width="1.2" fill="none"/>
<path d="M1213.0 674H1713.0M1213.5 666V682M1238.5 670V678M1263.5 670V678M1288.5 670V678M1313.5 670V678M1338.5 666V682M1363.5 670V678M1388.5 670V678M1413.5 670V678M1438.5 670V678M1463.5 666V682M1488.5 670V678M1513.5 670V678M1537.5 670V678M1562.5 670V678M1587.5 666V682M1612.5 670V678M1637.5 670V678M1662.5 670V678M1687.5 670V678M1712.5 666V682" stroke="#000" stroke-width="1" fill="none" shape-rendering="crispEdges"/>
<text x="1213.0" y="685" letter-spacing="-0.45">-37,50</text>
<text x="1712.2" y="685" letter-spacing="-0.45">37,50</text>
<text x="1713.0" y="700" letter-spacing="0.4">[kN/m]</text>
<text x="1463.5" y="685" text-anchor="middle">0</text>
</svg>
<div class="abs" style="left:5px;top:580px;width:55px;height:42px;background:#cce4f7;border:1px solid #00549e"></div>
<div class="abs" style="left:5px;top:625px;width:55px;height:42px;background:#e1e1e1;border:1px solid #c4c4c4"></div>
<div class="abs" style="left:5px;top:670px;width:55px;height:42px;background:#e1e1e1;border:1px solid #c4c4c4"></div>
<svg style="left:5px;top:580px" width="55" height="133" viewBox="5 580 55 133">
<rect x="18.5" y="587.5" width="29" height="28" fill="#fff" stroke="#000"/>
<rect x="19" y="588" width="28" height="3" fill="#0090ff"/>
<path d="M18 591.5H48M18 595.0H48M18 598.4H48M18 601.9H48M18 605.3H48M18 608.8H48M18 612.2H48M22.5 587V616M31.5 587V616M42.5 587V616" stroke="#000" stroke-width="1" fill="none"/>
<circle cx="25" cy="638.5" r="6.5" fill="#7fc8ff" stroke="#000"/>
<text x="33" y="644.5" font-family="Liberation Sans, sans-serif" font-size="7" font-weight="bold" fill="#000">Abc</text>
<path d="M31.500 647.500H49" stroke="#000" stroke-width="1.400"/>
<path d="M19 649H27M19 653.500H31M19 658H31" stroke="#000" stroke-width="1.500"/>
<rect x="33.500" y="652.500" width="13" height="7" rx="1" fill="#ffb070" stroke="#000"/>
<path d="M30.34 680.48L30.62 676.56L34.98 676.56L35.26 680.48L38.49 681.82L41.47 679.25L44.55 682.33L41.98 685.31L43.32 688.54L47.24 688.82L47.24 693.18L43.32 693.46L41.98 696.69L44.55 699.67L41.47 702.75L38.49 700.18L35.26 701.52L34.98 705.44L30.62 705.44L30.34 701.52L27.11 700.18L24.13 702.75L21.05 699.67L23.62 696.69L22.28 693.46L18.36 693.18L18.36 688.82L22.28 688.54L23.62 685.31L21.05 682.33L24.13 679.25L27.11 681.82Z" fill="#c8c45c" stroke="#2a2a10" stroke-width="1" stroke-linejoin="round"/>
<circle cx="32.8" cy="691.0" r="5.600" fill="#e1e1e1" stroke="#2a2a10" stroke-width="1"/>
</svg>
<div class="abs" style="left:1773px;top:107px;width:143px;height:20px;background:#d2d2d2"></div>
<div class="t" style="left:1776px;top:110px">Frames</div>
<div class="abs" style="left:1902px;top:118px;width:6px;height:2px;background:#000"></div>
<div class="hl" style="left:1777px;top:156px;width:135px"></div>
<div class="hl" style="left:1777px;top:383px;width:135px"></div>
<div class="abs" style="left:1777px;top:453px;width:135px;height:22px;background:#cce4f7;border:1px solid #0063b1"></div>
<div class="t" style="left:1800px;top:135px">Assign</div>
<div class="t" style="left:1800px;top:164px">Excavation</div>
<div class="t" style="left:1800px;top:186px">Terrain</div>
<div class="t" style="left:1800px;top:208px">Water</div>
<div class="t" style="left:1800px;top:230px">Surcharge</div>
<div class="t" style="left:1800px;top:252px">Applied forces</div>
<div class="t" style="left:1800px;top:274px">Anchors</div>
<div class="t" style="left:1800px;top:296px">Supports</div>
<div class="t" style="left:1800px;top:318px">Props</div>
<div class="t" style="left:1800px;top:340px">Earthquake</div>
<div class="t" style="left:1800px;top:362px">Stage settings</div>
<div class="t" style="left:1800px;top:391px">Analysis</div>
<div class="t" style="left:1800px;top:413px">Internal stability</div>
<div class="t" style="left:1800px;top:435px">Exter. stability</div>
<div class="t" style="left:1800px;top:457px">Dimensioning</div>
<div class="t" style="left:1800px;top:479px">Anchors Verification</div>
<svg style="left:1778px;top:130px" width="22" height="370" viewBox="1778 130 22 370">
<rect x="1783" y="135" width="11" height="14" fill="#000"/>
<rect x="1784" y="136" width="9" height="3" fill="#00b0b0"/><rect x="1784" y="140" width="9" height="4" fill="#ffff00"/><rect x="1784" y="145" width="9" height="3" fill="#00ffff"/>
<path d="M1785 142H1792" stroke="#000" stroke-width="1" stroke-dasharray="2 1"/><path d="M1785 147L1787 145.500L1789 147L1791 145.500" stroke="#000" fill="none" stroke-width="0.800"/>
<path d="M1790 165V177.500" stroke="#000" stroke-width="2"/><path d="M1790 165.500H1794" stroke="#800000" stroke-width="2"/><path d="M1782 174H1790" stroke="#800000" stroke-width="2"/>
<path d="M1784.500 165V171M1781.500 169L1784.500 172L1787.500 169" stroke="#0000ff" stroke-width="1.600" fill="none"/>
<rect x="1781.500" y="190.500" width="3" height="8" fill="#909090" stroke="#000"/><path d="M1785 190.500L1789.500 188H1796" stroke="#800000" stroke-width="1.600" fill="none"/>
<rect x="1785" y="212" width="11" height="10" fill="#00ffff"/><rect x="1781.500" y="210.500" width="3" height="11" fill="#909090" stroke="#000"/><path d="M1785 210.500H1796" stroke="#800000" stroke-width="1"/><path d="M1785 214H1796" stroke="#0000ff" stroke-width="1.400" stroke-dasharray="3 1"/>
<rect x="1781.500" y="233.500" width="3" height="9" fill="#909090" stroke="#000"/><path d="M1784.500 234.500H1796" stroke="#800000" stroke-width="1.400"/>
<path d="M1785 234V230H1786V231.500H1788V230H1789V231.500H1791V230H1792V231.500H1794V230H1795V234Z" fill="#0000ff"/>
<path d="M1790 251V259M1787 256.500L1790 260L1793 256.500" stroke="#0000ff" stroke-width="1.600" fill="none"/><path d="M1795 263H1784M1787 260L1783.500 263L1787 266" stroke="#0000ff" stroke-width="1.600" fill="none"/>
<path d="M1785.500 275V288" stroke="#808080" stroke-width="2"/><path d="M1786 274.500H1790M1781 286H1785" stroke="#800000" stroke-width="1.600"/>
<path d="M1782 280H1788" stroke="#ff00ff" stroke-width="2.400"/><path d="M1788 280.500C1791 281 1792 283 1795 284" stroke="#000" stroke-width="1.400" fill="none"/><path d="M1788 280C1791 280.300 1792 282 1795 283" stroke="#ff00ff" stroke-width="1" fill="none"/>
<path d="M1790 297V310" stroke="#808080" stroke-width="2"/><path d="M1791 297.500H1794M1784 305.500H1789" stroke="#800000" stroke-width="1.600"/><path d="M1785 297L1789 299.700L1785 302.500Z" fill="#0000ff"/>
<path d="M1790 319V332" stroke="#808080" stroke-width="2"/><path d="M1791 319.500H1794M1784 328H1789" stroke="#800000" stroke-width="1.600"/><path d="M1781 321H1789" stroke="#ff00ff" stroke-width="2.200"/><path d="M1782 323H1789" stroke="#000" stroke-width="1"/>
<rect x="1787.500" y="340.500" width="3" height="7" fill="#808080" stroke="#555"/><path d="M1782 347.500H1795" stroke="#000" stroke-width="1.200"/><path d="M1784 349L1787 351L1784 353M1788 349L1791 351L1788 353M1792 349L1795 351L1792 353" stroke="#00c000" stroke-width="1.200" fill="none"/>
<rect x="1787.500" y="361.500" width="7" height="8" fill="#ffff00" stroke="#000"/><rect x="1781.500" y="367.500" width="7" height="8" fill="#ffff00" stroke="#000"/>
<text x="1783.500" y="374.500" font-family="Liberation Sans, sans-serif" font-size="7" font-weight="bold">1</text><text x="1789.300" y="368.500" font-family="Liberation Sans, sans-serif" font-size="7" font-weight="bold">2</text>
<path d="M1790 391.500V405.500L1795.500 401.500Z" fill="#ffff00" stroke="#ff0000" stroke-width="1.200"/><path d="M1785.500 406V391.500H1788.500M1790 391V406" stroke="#000" stroke-width="1.200" fill="none"/><path d="M1781 401H1785" stroke="#800000" stroke-width="1.600"/>
<path d="M1785.500 413.5H1793V422.0L1785.500 426.0Z" fill="#ffff00" stroke="#000" stroke-width="1.200"/>
<path d="M1785 413.5H1796M1781 422.0H1785" stroke="#800000" stroke-width="1.400"/>
<path d="M1786 417.0L1793.500 422.0" stroke="#ff0000" stroke-width="1.400"/>
<rect x="1786.500" y="437.500" width="3" height="6" fill="#ffff00" stroke="#000" stroke-width="1.200"/><path d="M1790 437H1796M1782 443.500H1787" stroke="#800000" stroke-width="1.400"/>
<path d="M1795.500 438C1794 444 1792 447 1788.500 448.500C1786 448 1783.500 446.500 1782.500 444.500" stroke="#ff0000" stroke-width="1.400" fill="none"/>
<path d="M1788.800 457.400L1781.300 465.900L1782.400 469.100L1786.100 470.700H1793.600V468.600L1792 467.500V464.900L1794.100 463.800L1793.600 461.100L1790.900 458.500Z" fill="#ffff00" stroke="#ff0000" stroke-width="1.400" stroke-linejoin="round"/><path d="M1788.500 457.500V470.500" stroke="#000" stroke-width="1.200"/>
<path d="M1785.500 479.5H1793V488.0L1785.500 492.0Z" fill="#ffff00" stroke="#000" stroke-width="1.200"/>
<path d="M1785 479.5H1796M1781 488.0H1785" stroke="#800000" stroke-width="1.400"/>
<path d="M1786 483.0L1793.500 488.0" stroke="#ff0000" stroke-width="1.400"/>
</svg>
<div class="abs" style="left:1773px;top:860px;width:143px;height:20px;background:#d2d2d2"></div>
<div class="t" style="left:1776px;top:863px">Outputs</div>
<div class="abs" style="left:1902px;top:871px;width:6px;height:2px;background:#000"></div>
<div class="btn" style="left:1777px;top:884px;width:135px;height:22px"></div>
<div class="t" style="left:1800px;top:888px">Add picture</div>
<div class="t" style="left:1777px;top:909px">Dimensioning :</div>
<div class="t" style="left:1892px;top:909px;width:20px;text-align:right">0</div>
<div class="t" style="left:1777px;top:927px">Total :</div>
<div class="t" style="left:1892px;top:927px;width:20px;text-align:right">0</div>
<div class="btn" style="left:1777px;top:945px;width:135px;height:22px"></div>
<div class="t" style="left:1800px;top:949px">List of pictures</div>
<div class="hl" style="left:1777px;top:973px;width:135px"></div>
<div class="btn" style="left:1777px;top:980px;width:65px;height:42px"></div>
<div class="btn" style="left:1847px;top:980px;width:65px;height:42px"></div>
<div class="btn" style="left:1777px;top:1025px;width:135px;height:22px"></div>
<div class="t" style="left:1800px;top:1029px">Copy view</div>
<svg style="left:1777px;top:884px" width="135" height="165" viewBox="1777 884 135 165">
<rect x="1781.500" y="887.500" width="15" height="15" fill="#f4f4f4" stroke="#333"/><path d="M1784.500 890V899.500H1790.500V895.500H1788V890.500H1784.500M1785 895.500H1788" stroke="#000" fill="none"/><path d="M1789 891.500H1795M1792 888.500V894.500" stroke="#00a000" stroke-width="2"/>
<rect x="1781.500" y="948.500" width="15" height="15" fill="#f4f4f4" stroke="#333"/><path d="M1784.500 951V960.500H1790.500V956.500H1788V951.500H1784.500M1785 956.500H1788" stroke="#000" fill="none"/><path d="M1790 951.500H1795M1790 953.500H1795M1790 955.500H1795" stroke="#000" stroke-width="1" stroke-dasharray="2 1"/>
<rect x="1800.5" y="990.500" width="19" height="3.500" fill="#c8b088"/>
<path d="M1800.5 993V990.500H1802.5M1819.5 993V990.500H1817.5" stroke="#222" fill="none"/>
<rect x="1802.5" y="987.500" width="15" height="6" rx="1" fill="#fff" stroke="#222"/>
<rect x="1798.5" y="993.500" width="23" height="12" rx="1.500" fill="#c8b088" stroke="#222"/>
<rect x="1801.0" y="999" width="18" height="4" fill="#555"/><rect x="1802.0" y="1000" width="16" height="2" fill="#aaa"/>
<rect x="1800.0" y="995" width="1.500" height="1" fill="#222"/><rect x="1818.0" y="995" width="2" height="1" fill="#222"/>
<rect x="1802.5" y="1002.500" width="15" height="13" fill="#fff" stroke="#222"/>
<path d="M1804.5 1005.500H1816.0M1804.5 1007.500H1816.0M1807.0 1009.500H1816.0M1807.0 1011.500H1816.0M1809.0 1013.500H1816.0" stroke="#111" stroke-width="1"/>
<rect x="1870.5" y="990.500" width="19" height="3.500" fill="#c8b088"/>
<path d="M1870.5 993V990.500H1872.5M1889.5 993V990.500H1887.5" stroke="#222" fill="none"/>
<rect x="1872.5" y="987.500" width="15" height="6" rx="1" fill="#fff" stroke="#222"/>
<rect x="1868.5" y="993.500" width="23" height="12" rx="1.500" fill="#c8b088" stroke="#222"/>
<rect x="1871.0" y="999" width="18" height="4" fill="#555"/><rect x="1872.0" y="1000" width="16" height="2" fill="#aaa"/>
<rect x="1870.0" y="995" width="1.500" height="1" fill="#222"/><rect x="1888.0" y="995" width="2" height="1" fill="#222"/>
<rect x="1872.5" y="1002.500" width="15" height="13" fill="#fff" stroke="#222"/>
<path d="M1877.0 1005.500H1875.5V1013.500H1877.0" stroke="#ff0000" stroke-width="1.200" fill="none"/>
<path d="M1879.0 1005.500H1885.0V1013.500H1883.5V1011H1882.0V1008.500H1880.5Z" stroke="#ff0000" stroke-width="1.200" fill="none"/>
<rect x="1781.500" y="1028.500" width="8" height="9" fill="#f4f4f4" stroke="#333"/><path d="M1783.500 1030.500H1786V1032.500H1783.500V1036H1788V1033.500H1786" stroke="#000" fill="none" stroke-width="0.900"/><rect x="1790.500" y="1038.500" width="6" height="5" fill="#f4f4f4" stroke="#000"/><path d="M1791 1040.500H1796" stroke="#000"/><path d="M1792 1032.500H1793.500V1037M1792 1035.500L1793.500 1037.500L1795 1035.500" stroke="#00a000" stroke-width="1.200" fill="none"/>
</svg>
<div class="abs" style="left:1px;top:1054px;width:1918px;height:1px;background:#d7d7d7"></div>
<svg style="left:1905px;top:1065px" width="13" height="13" viewBox="0 0 13 13"><path d="M9 1h2v2h-2zM5 5h2v2h-2zM9 5h2v2h-2zM1 9h2v2h-2zM5 9h2v2h-2zM9 9h2v2h-2z" fill="#bfbfbf"/></svg>
<div class="abs" style="left:4px;top:723px;width:20px;height:328px;background:#d2d2d2"></div>
<div class="abs" style="left:15px;top:730px;width:2px;height:6px;background:#000"></div>
<div class="t" style="left:7px;top:1047px;transform-origin:0 0;transform:rotate(-90deg)">Dimensioning</div>
<div class="t b" style="left:34px;top:740px;letter-spacing:-0.7px">Analysis :</div>
<div class="btn" style="left:88px;top:734px;width:23px;height:26px"></div>
<div class="abs" style="left:116px;top:734px;width:23px;height:26px;background:#cccccc"></div>
<svg style="left:88px;top:734px" width="52" height="26" viewBox="88 734 52 26"><rect x="93.500" y="740.500" width="13" height="13" rx="3.500" fill="none" stroke="#009a00" stroke-width="1.200"/><path d="M96 747H104M100 743V751" stroke="#008000" stroke-width="2"/><rect x="121.500" y="740.500" width="13" height="13" rx="3.500" fill="none" stroke="#a4a4a4" stroke-width="1.200"/><path d="M124 747H132" stroke="#a8a8a8" stroke-width="2"/></svg>
<div class="abs" style="left:144px;top:734px;width:163px;height:26px;background:#cce4f7;border:1px solid #0063b1"></div>
<div class="t " style="left:150px;top:740px;">[1] - entire structure (8,00 m)</div>
<div class="btn" style="left:1668px;top:734px;width:88px;height:26px"></div>
<svg style="left:1680px;top:738px" width="18" height="18" viewBox="0 0 18 18"><path d="M1.500 4.500H7.500L9.500 6.500V15.500H1.500Z" fill="#fff" stroke="#000"/><path d="M3 10.500H5M6 10.500H8M3 13H7" stroke="#000"/><circle cx="8.500" cy="5.500" r="3.800" fill="#00e0e0" stroke="#000" stroke-width="1.200"/><path d="M11 8.500L15.500 13" stroke="#000" stroke-width="2"/></svg>
<div class="t " style="left:1699px;top:740px;"><u>I</u>n detail</div>
<div class="hl" style="left:34px;top:769px;width:1722px"></div>
<div class="hl" style="left:34px;top:779px;width:350px"></div>
<div class="t " style="left:34px;top:794px;">Stage :</div>
<div class="t " style="left:150px;top:794px;letter-spacing:-0.12px">(envelopes from all stages)</div>
<div class="btn" style="left:296px;top:790px;width:88px;height:22px;text-align:center;line-height:20px">Edit</div>
<div class="t " style="left:34px;top:819px;letter-spacing:-0.14px">Geometry : RC rectangular wall h = 0,30 m</div>
<div class="hl" style="left:34px;top:846px;width:11px"></div>
<div class="hl" style="left:115px;top:846px;width:269px"></div>
<div class="t " style="left:48px;top:840px;">Information</div>
<div class="abs" style="left:34px;top:862px;width:350px;height:94px;background:#fff;border:1px solid #adadad"></div>
<div class="t " style="left:44px;top:869px;">Max. displacement</div>
<div class="t " style="left:44px;top:884px;">Max. shear force on 1m of wall</div>
<div class="t " style="left:44px;top:900px;">Max. moment on 1m of wall</div>
<div class="t " style="left:212px;top:884px;">Q<span style="font-size:9.500px;position:relative;top:2px">max</span></div>
<div class="t " style="left:212px;top:900px;">M<span style="font-size:9.500px;position:relative;top:2px">max</span></div>
<div class="t " style="left:248px;top:869px;">=</div>
<div class="t" style="left:249px;top:869px;width:40px;text-align:right">-2,6</div>
<div class="t " style="left:296px;top:869px;">mm</div>
<div class="t " style="left:248px;top:884px;">=</div>
<div class="t" style="left:249px;top:884px;width:40px;text-align:right">29,54</div>
<div class="t " style="left:296px;top:884px;">kN/m</div>
<div class="t " style="left:248px;top:900px;">=</div>
<div class="t" style="left:249px;top:900px;width:40px;text-align:right">31,84</div>
<div class="t " style="left:296px;top:900px;">kNm/m</div>
<div class="t " style="left:397px;top:784px;">Verification</div>
<div class="t " style="left:463px;top:784px;">:</div>
<div class="abs" style="left:469px;top:779px;width:116px;height:23px;background:#fff;border:1px solid #adadad"></div>
<div class="t " style="left:473px;top:784px;">entire structure</div>
<svg style="left:570px;top:788px" width="9" height="6" viewBox="0 0 9 6"><path d="M1 1H8L4.500 5Z" fill="#000"/></svg>
<div class="hl" style="left:397px;top:808px;width:326px"></div>
<div class="hl" style="left:736px;top:808px;width:320px"></div>
<div class="chk" style="left:398px;top:821px"></div>
<svg style="left:398px;top:821px" width="14" height="14" viewBox="0 0 14 14"><path d="M2.800 7.600L5.600 10.200L11 3.900" stroke="#000" stroke-width="1.900" fill="none"/></svg>
<div class="t " style="left:418px;top:821px;">Check cross-section</div>
<div class="chk" style="left:737px;top:821px"></div>
<div class="t " style="left:757px;top:821px;">Check crack width</div>
<div class="t " style="left:397px;top:847px;">Reduct. coefficient of bearing capacity :</div>
<div class="inp" style="left:611px;top:842px;width:88px;height:23px">1,00</div>
<div class="t " style="left:704px;top:847px;">[–]</div>
<div class="t gray" style="left:736px;top:847px;">Allowable crack width :</div>
<div class="inp dis" style="left:929px;top:842px;width:88px;height:23px"></div>
<div class="t gray" style="left:1022px;top:847px;">[mm]</div>
<div class="t gray" style="left:736px;top:876px;">Reduct. coeff. for crack width calc. :</div>
<div class="inp dis" style="left:929px;top:871px;width:88px;height:23px"></div>
<div class="t gray" style="left:1022px;top:876px;">[–]</div>
<div class="hl" style="left:397px;top:907px;width:11px"></div>
<div class="hl" style="left:492px;top:907px;width:299px"></div>
<div class="t " style="left:411px;top:901px;">Reinforcement</div>
<div class="t " style="left:397px;top:928px;">No. of bars :</div>
<div class="inp" style="left:466px;top:923px;width:61px;height:23px">8,00</div>
<div class="t " style="left:532px;top:928px;">[pcs/m]</div>
<div class="t " style="left:397px;top:957px;">Cover :</div>
<div class="inp" style="left:466px;top:952px;width:61px;height:23px">40,0</div>
<div class="t " style="left:532px;top:957px;">[mm]</div>
<div class="t " style="left:397px;top:986px;">Profile :</div>
<div class="inp" style="left:466px;top:981px;width:61px;height:23px">16,0</div>
<div class="t " style="left:532px;top:986px;">[mm]</div>
<div class="chk" style="left:588px;top:925px"></div>
<div class="t " style="left:608px;top:925px;">Shear reinforcement</div>
<div class="t gray" style="left:587px;top:951px;">Profile :</div>
<div class="inp dis" style="left:656px;top:946px;width:88px;height:23px">16,0</div>
<div class="t gray" style="left:749px;top:951px;">[mm]</div>
<div class="t gray" style="left:587px;top:980px;">No. of bars :</div>
<div class="inp dis" style="left:656px;top:975px;width:88px;height:23px">2,00</div>
<div class="t gray" style="left:749px;top:980px;">[pcs/m]</div>
<div class="t gray" style="left:587px;top:1009px;">Spacing :</div>
<div class="inp dis" style="left:656px;top:1004px;width:88px;height:23px">200,0</div>
<div class="t gray" style="left:749px;top:1009px;">[mm]</div>
<div class="hl" style="left:804px;top:907px;width:11px"></div>
<div class="hl" style="left:861px;top:907px;width:195px"></div>
<div class="t b" style="left:818px;top:901px;letter-spacing:-0.4px">Results</div>
<div class="t b" style="left:804px;top:924px;letter-spacing:-0.55px">SHEAR :</div>
<div class="t b grn" style="left:927px;top:924px;letter-spacing:-0.5px">SATISFACTORY</div>
<div class="t" style="left:1006px;top:924px;width:50px;text-align:right;letter-spacing:-0.3px">(22,1%)</div>
<div class="t b" style="left:804px;top:942px;letter-spacing:-0.55px">BENDING :</div>
<div class="t b grn" style="left:927px;top:942px;letter-spacing:-0.5px">SATISFACTORY</div>
<div class="t" style="left:1006px;top:942px;width:50px;text-align:right;letter-spacing:-0.3px">(20,2%)</div>
<div class="t b" style="left:804px;top:960px;letter-spacing:-0.55px">DESIGN PRINCIPLES :</div>
<div class="t b grn" style="left:927px;top:960px;letter-spacing:-0.5px">SATISFACTORY</div>
<div class="t" style="left:1006px;top:960px;width:50px;text-align:right;letter-spacing:-0.3px">(20,4%)</div>
<div class="hl" style="left:804px;top:984px;width:11px"></div>
<div class="hl" style="left:924px;top:984px;width:132px"></div>
<div class="t " style="left:818px;top:978px;letter-spacing:-0.17px">Reinforcement area</div>
<div class="t b" style="left:804px;top:1001px;letter-spacing:-0.05px">Required reinforcement area :</div>
<div class="t b" style="left:804px;top:1019px;letter-spacing:0.02px">Inputted reinforcement area :</div>
<div class="t b" style="left:966px;top:1001px;width:50px;text-align:right;letter-spacing:0px">327,6</div>
<div class="t b" style="left:966px;top:1019px;width:50px;text-align:right;letter-spacing:0px">1608,5</div>
<div class="t b" style="left:1022px;top:1001px;letter-spacing:-0.3px">mm<span style="font-size:9px;position:relative;top:-5px">2</span></div>
<div class="t b" style="left:1022px;top:1019px;letter-spacing:-0.3px">mm<span style="font-size:9px;position:relative;top:-5px">2</span></div>
<div class="abs" style="left:1069px;top:779px;width:320px;height:261px;background:#fff;border:1px solid #adadad;border-bottom:none"></div>
<svg style="left:1070px;top:780px" width="318" height="260" viewBox="1070 780 318 260" font-family="Liberation Sans, sans-serif" font-size="12">
<path d="M1110 906H1371.500V938L1364 943L1379 948.500L1371.500 953.500V985H1110V953.500L1117.500 948.500L1103.500 943L1110 938Z" fill="#d0d0d0" stroke="#804080" stroke-width="1.800" stroke-linejoin="miter"/>
<circle cx="1126.2" cy="919" r="2.900" fill="#000"/><circle cx="1126.2" cy="972.200" r="2.900" fill="#000"/>
<circle cx="1158.7" cy="919" r="2.900" fill="#000"/><circle cx="1158.7" cy="972.200" r="2.900" fill="#000"/>
<circle cx="1191.3" cy="919" r="2.900" fill="#000"/><circle cx="1191.3" cy="972.200" r="2.900" fill="#000"/>
<circle cx="1224.2" cy="919" r="2.900" fill="#000"/><circle cx="1224.2" cy="972.200" r="2.900" fill="#000"/>
<circle cx="1256.7" cy="919" r="2.900" fill="#000"/><circle cx="1256.7" cy="972.200" r="2.900" fill="#000"/>
<circle cx="1289.3" cy="919" r="2.900" fill="#000"/><circle cx="1289.3" cy="972.200" r="2.900" fill="#000"/>
<circle cx="1322.2" cy="919" r="2.900" fill="#000"/><circle cx="1322.2" cy="972.200" r="2.900" fill="#000"/>
<circle cx="1354.7" cy="919" r="2.900" fill="#000"/><circle cx="1354.7" cy="972.200" r="2.900" fill="#000"/>
<path d="M1092.500 904V987M1088 906.500H1104.500M1088 985.500H1104.500M1089.500 903.500L1095.500 909.500M1089.500 982.500L1095.500 988.500" stroke="#000" stroke-width="1" fill="none"/>
<text x="1081" y="943" letter-spacing="-0.5">0,30</text>
<text x="1263.500" y="886.500" letter-spacing="-0.2">Cover = 40,0 mm</text>
<path d="M1354.500 889.500H1263.500L1240.500 911.500" stroke="#000" stroke-width="1" fill="none"/><circle cx="1240.500" cy="911.500" r="1.600"/>
<text x="1149.500" y="940" letter-spacing="-0.12">8 prof. 16,0mm,cover 40,0mm</text>
<path d="M1307.500 942.500H1149L1126.500 919.500" stroke="#000" stroke-width="1" fill="none"/>
</svg>
<div class="abs" style="left:1739px;top:779px;width:17px;height:261px;background:#f0f0f0;border:1px solid #b4b4b4;border-top-color:#cfcfcf;border-bottom-color:#cfcfcf"></div>
<div class="abs" style="left:1739px;top:796px;width:17px;height:185px;background:#cdcdcd"></div>
<div class="abs" style="left:1739px;top:779px;width:17px;height:17px;border:1px solid #cfcfcf"></div>
<div class="abs" style="left:1739px;top:1023px;width:17px;height:17px;border:1px solid #cfcfcf"></div>
<svg style="left:1739px;top:779px" width="17" height="261" viewBox="0 0 17 261"><path d="M3 11.500L8.500 5.500L14 11.500Z" fill="#606060"/><path d="M3 250L8.500 256L14 250Z" fill="#606060"/></svg>
</body></html>
